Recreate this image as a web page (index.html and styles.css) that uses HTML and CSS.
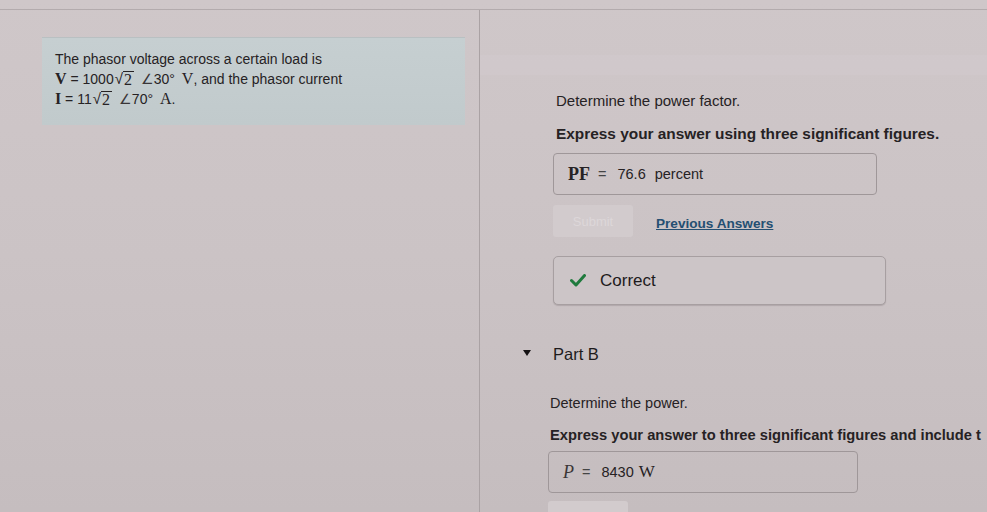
FILE: index.html
```html
<!DOCTYPE html>
<html lang="en">
<head>
<meta charset="utf-8">
<title>Phasor problem</title>
<link rel="stylesheet" href="styles.css">
</head>
<body>
<div class="screen">
  <div class="cols">
    <div class="left">
      <div class="problem">
        <p>The phasor voltage across a certain load is</p>
        <p><b class="mv">V</b> = 1000<span class="sqrt"><span class="rsign">√</span><span class="rad">2</span></span> <span class="ang">∠</span>30° <span class="unit">V</span>, and the phasor current</p>
        <p><b class="mv">I</b> = 11<span class="sqrt"><span class="rsign">√</span><span class="rad">2</span></span> <span class="ang">∠</span>70° <span class="unit">A</span>.</p>
      </div>
    </div>
    <div class="right">
      <div class="band"></div>
      <div class="part parta">
        <p class="prompt">Determine the power factor.</p>
        <p class="instr">Express your answer using three significant figures.</p>
        <div class="answer"><b class="mvar">PF</b><span class="eq">=</span><span class="val">76.6</span><span class="word">percent</span></div>
        <div class="actions">
          <span class="submit">Submit</span>
          <a class="prev" href="#">Previous Answers</a>
        </div>
        <div class="feedback">
          <svg class="check" width="16" height="13" viewBox="0 0 16 13"><path d="M1.5 6.5 L6 11 L14.5 1.5" fill="none" stroke="#1f7a3d" stroke-width="3" stroke-linecap="round" stroke-linejoin="round"/></svg>
          <span class="fbtext">Correct</span>
        </div>
      </div>
      <div class="parthead">
        <span class="tri"></span>
        <span class="ptitle">Part B</span>
      </div>
      <div class="part partb">
        <p class="prompt prompt2">Determine the power.</p>
        <p class="instr instr2">Express your answer to three significant figures and include t</p>
        <div class="answer answer2"><i class="mvar2">P</i><span class="eq">=</span><span class="val">8430</span><span class="unitw">W</span></div>
        <div class="submit submit2"></div>
      </div>
    </div>
  </div>
</div>
</body>
</html>
```
FILE: styles.css
```css
html, body {
  margin: 0;
  padding: 0;
}
body {
  width: 987px;
  height: 512px;
  overflow: hidden;
  background: linear-gradient(to bottom, #cfc7c9 0%, #cbc3c5 50%, #c5bdbf 100%);
  font-family: "Liberation Sans", Arial, sans-serif;
  color: #262224;
}
p { margin: 0; }
.screen {
  padding-top: 9px;
}
.cols {
  display: flex;
  border-top: 1px solid #b3abad;
  height: 503px;
}
.left {
  width: 479px;
  flex: none;
  border-right: 1px solid #aaa2a4;
}
.problem {
  margin-top: 27px;
  margin-left: 42px;
  width: 423px;
  height: 88px;
  box-sizing: border-box;
  padding: 12px 13px 0;
  background: linear-gradient(to bottom, #c6cfd1, #c1cacc);
  border-top: 1px solid #b9c0c2;
  font-size: 14px;
  line-height: 19px;
  white-space: nowrap;
}
.mv {
  font-family: "Liberation Serif", "Times New Roman", serif;
  font-size: 16px;
}
.unit {
  font-family: "Liberation Serif", "Times New Roman", serif;
  font-size: 16px;
  margin-left: 3px;
}
.sqrt {
  display: inline-flex;
  align-items: flex-start;
  margin-left: 1px;
}
.rsign {
  font-size: 15px;
}
.rad {
  border-top: 1px solid #262224;
  font-family: "Liberation Serif", "Times New Roman", serif;
  font-size: 16px;
  line-height: 16px;
  margin-top: 2px;
  padding: 0 2px 0 1px;
}
.ang {
  font-size: 14px;
  margin-left: 3px;
  color: #3a3637;
}
.right {
  flex: 1;
  min-width: 0;
}
.band {
  margin-top: 45px;
  height: 20px;
  background: rgba(218, 210, 212, 0.22);
}
.part {
  display: flex;
  flex-direction: column;
  align-items: flex-start;
}
.parta {
  padding-left: 76px;
}
.prompt {
  font-size: 15px;
  line-height: 16px;
}
.parta .prompt {
  margin-top: 18px;
}
.instr {
  font-weight: bold;
  font-size: 15.4px;
  line-height: 18px;
  margin-top: 16px;
  white-space: nowrap;
}
.answer {
  margin-top: 10px;
  margin-left: -3px;
  width: 324px;
  height: 42px;
  box-sizing: border-box;
  border: 1px solid #9f9799;
  border-radius: 4px;
  display: flex;
  align-items: center;
  padding-left: 14px;
  font-size: 14.5px;
}
.mvar {
  font-family: "Liberation Serif", "Times New Roman", serif;
  font-size: 18px;
}
.eq {
  margin: 0 11px 0 8px;
  color: #444;
}
.word {
  margin-left: 9px;
}
.actions {
  margin-top: 10px;
  margin-left: -3px;
  display: flex;
  align-items: center;
}
.submit {
  width: 80px;
  height: 32px;
  box-sizing: border-box;
  background: #d2cbcd;
  border-radius: 3px;
  color: #ddd7d9;
  font-size: 13px;
  display: flex;
  align-items: center;
  justify-content: center;
}
.prev {
  margin-left: 23px;
  margin-top: 4px;
  font-size: 13.6px;
  font-weight: bold;
  color: #244f72;
  text-decoration: underline;
}
.feedback {
  margin-top: 19px;
  margin-left: -3px;
  width: 333px;
  height: 49px;
  box-sizing: border-box;
  border: 1px solid #a79fa1;
  border-radius: 5px;
  background: #ccc5c7;
  display: flex;
  align-items: center;
  padding-left: 16px;
  gap: 14px;
  box-shadow: 0 1px 1px rgba(120, 110, 112, 0.3);
}
.fbtext {
  font-size: 17px;
  color: #1e1b1c;
}
.parthead {
  margin-top: 40px;
  padding-left: 43px;
  display: flex;
  align-items: center;
  height: 18px;
}
.tri {
  width: 0;
  height: 0;
  border-left: 4px solid transparent;
  border-right: 4px solid transparent;
  border-top: 6px solid #151213;
  margin-top: -2px;
}
.ptitle {
  margin-left: 22px;
  font-size: 16.5px;
  color: #1e1b1c;
}
.partb {
  padding-left: 70px;
}
.partb .prompt {
  margin-top: 32px;
}
.prompt2 {
  font-size: 14.5px;
}
.instr2 {
  font-size: 14.7px;
  margin-top: 15px;
}
.answer2 {
  margin-top: 7px;
  margin-left: -2px;
  width: 310px;
}
.mvar2 {
  font-family: "Liberation Serif", "Times New Roman", serif;
  font-size: 18px;
  color: #3a3637;
}
.unitw {
  margin-left: 5px;
  font-family: "Liberation Serif", "Times New Roman", serif;
  font-size: 17px;
}
.submit2 {
  margin-top: 8px;
  margin-left: -2px;
}
```
